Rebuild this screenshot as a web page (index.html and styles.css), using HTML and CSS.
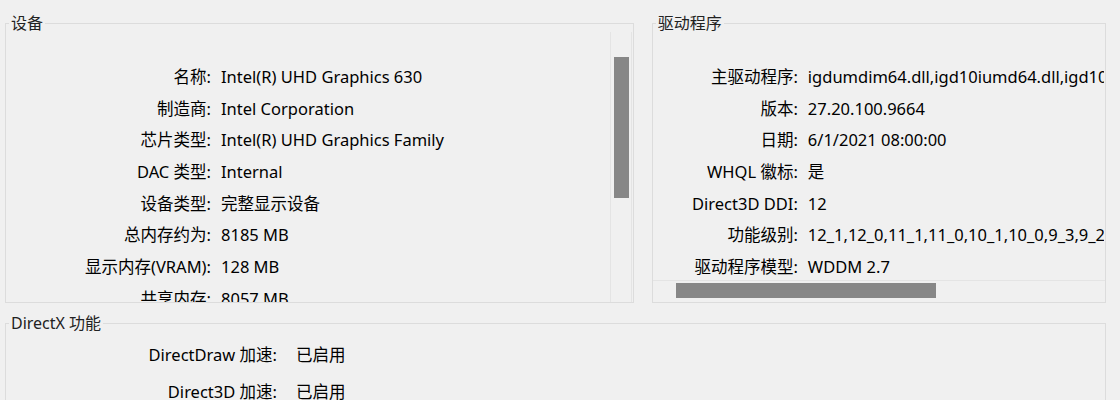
FILE: index.html
```html
<!DOCTYPE html>
<html lang="zh-CN">
<head>
<meta charset="utf-8">
<title>DirectX 诊断工具 - 显示</title>
<link rel="stylesheet" href="styles.css">
</head>
<body>
<div class="top">
  <fieldset class="group device">
    <legend>设备</legend>
    <div class="panel">
      <div class="rows left-rows">
        <div class="k">名称:</div><div class="v">Intel(R) UHD Graphics 630</div>
        <div class="k">制造商:</div><div class="v">Intel Corporation</div>
        <div class="k">芯片类型:</div><div class="v">Intel(R) UHD Graphics Family</div>
        <div class="k">DAC 类型:</div><div class="v">Internal</div>
        <div class="k">设备类型:</div><div class="v">完整显示设备</div>
        <div class="k">总内存约为:</div><div class="v">8185 MB</div>
        <div class="k">显示内存(VRAM):</div><div class="v">128 MB</div>
        <div class="k">共享内存:</div><div class="v">8057 MB</div>
      </div>
      <div class="vscroll"><div class="vthumb"></div></div>
    </div>
  </fieldset>
  <fieldset class="group driver">
    <legend>驱动程序</legend>
    <div class="panel col">
      <div class="rows right-rows">
        <div class="k">主驱动程序:</div><div class="v">igdumdim64.dll,igd10iumd64.dll,igd10iumd64.dll,igd12umd64.dll</div>
        <div class="k">版本:</div><div class="v">27.20.100.9664</div>
        <div class="k">日期:</div><div class="v">6/1/2021 08:00:00</div>
        <div class="k">WHQL 徽标:</div><div class="v">是</div>
        <div class="k">Direct3D DDI:</div><div class="v">12</div>
        <div class="k">功能级别:</div><div class="v">12_1,12_0,11_1,11_0,10_1,10_0,9_3,9_2,9_1</div>
        <div class="k">驱动程序模型:</div><div class="v">WDDM 2.7</div>
      </div>
      <div class="hscroll"><div class="hthumb"></div></div>
    </div>
  </fieldset>
</div>
<fieldset class="group dx">
  <legend>DirectX 功能</legend>
  <div class="rows dx-rows">
    <div class="k">DirectDraw 加速:</div><div class="v">已启用</div>
    <div class="k">Direct3D 加速:</div><div class="v">已启用</div>
  </div>
</fieldset>
</body>
</html>
```

FILE: styles.css
```css
html, body {
  margin: 0;
  padding: 0;
}
body {
  background: #f0f0f0;
  font-family: "Noto Sans", "Noto Sans CJK SC", sans-serif;
  font-size: 16.5px;
  color: #000;
  padding: 14px 0 0 5px;
  width: 1101px;
  height: 386px;
  overflow: hidden;
}
.top {
  display: flex;
  gap: 18px;
}
.group {
  margin: 0;
  padding: 0;
  border: 1px solid #dcdcdc;
  box-sizing: border-box;
  min-width: 0;
}
.group legend {
  padding: 0 2px;
  margin-left: 3px;
  font-size: 16px;
  line-height: 18px;
  color: #222;
}
.device {
  width: 630px;
  height: 289px;
}
.driver {
  width: 455px;
  height: 289px;
}
.panel {
  display: flex;
  height: 270px;
  overflow: hidden;
}
.panel.col {
  flex-direction: column;
}
.rows {
  display: grid;
  column-gap: 10px;
  align-content: start;
}
.k {
  text-align: right;
  white-space: nowrap;
}
.v {
  white-space: nowrap;
}
.left-rows {
  flex: 1;
  grid-template-columns: 205px auto;
  grid-auto-rows: 31.7px;
  line-height: 31.7px;
  padding-top: 29px;
  overflow: hidden;
}
.vscroll {
  width: 20px;
  margin-right: 1px;
  border-left: 1px solid #e4e4e4;
  border-right: 1px solid #e4e4e4;
  position: relative;
}
.vthumb {
  position: absolute;
  left: 3px;
  top: 25px;
  width: 15px;
  height: 141px;
  background: #878787;
}
.right-rows {
  flex: 1;
  grid-template-columns: 145px auto;
  grid-auto-rows: 31.7px;
  line-height: 31.7px;
  padding-top: 29px;
  overflow: hidden;
  margin-right: 1px;
}
.hscroll {
  height: 21px;
  flex: none;
  border-top: 1px solid #e4e4e4;
  position: relative;
}
.hthumb {
  position: absolute;
  left: 23px;
  top: 2px;
  width: 260px;
  height: 15px;
  background: #878787;
}
.dx {
  margin-top: 11px;
  width: 1101px;
  height: 120px;
}
.dx-rows {
  grid-template-columns: 271px auto;
  column-gap: 19px;
  grid-auto-rows: 37px;
  line-height: 37px;
  padding-top: 4px;
}
```
